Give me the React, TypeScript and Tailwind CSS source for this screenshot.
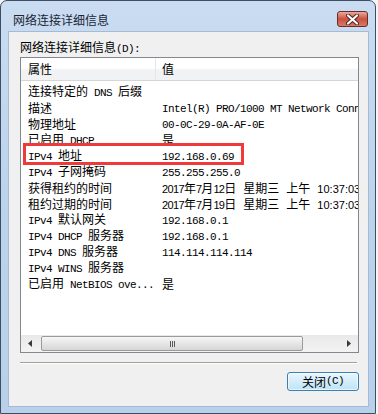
import React from "react";

type Val = string | { date: string };

const rows: [string, Val][] = [
  ["连接特定的 DNS 后缀", ""],
  ["描述", "Intel(R) PRO/1000 MT Network Connection"],
  ["物理地址", "00-0C-29-0A-AF-0E"],
  ["已启用 DHCP", "是"],
  ["IPv4 地址", "192.168.0.69"],
  ["IPv4 子网掩码", "255.255.255.0"],
  ["获得租约的时间", { date: "2017年7月12日 星期三 上午 10:37:03" }],
  ["租约过期的时间", { date: "2017年7月19日 星期三 上午 10:37:03" }],
  ["IPv4 默认网关", "192.168.0.1"],
  ["IPv4 DHCP 服务器", "192.168.0.1"],
  ["IPv4 DNS 服务器", "114.114.114.114"],
  ["IPv4 WINS 服务器", ""],
  ["已启用 NetBIOS ove...", "是"],
];

// ascii runs in a narrow mono face, CJK in 12px
function Mixed({ text }: { text: string }) {
  const parts = text.split(/([\x00-\x7f]+)/).filter((p) => p !== "");
  return (
    <>
      {parts.map((p, i) =>
        /^[\x00-\x7f]+$/.test(p) ? (
          <span key={i} className="font-['Liberation_Mono',monospace] text-[11px] tracking-[-0.6px] whitespace-pre">
            {p}
          </span>
        ) : (
          <span key={i}>{p}</span>
        )
      )}
    </>
  );
}

// date strings use a proportional face for digits
function DateText({ text }: { text: string }) {
  const parts = text.split(/([0-9:]+| )/).filter((p) => p !== "");
  return (
    <>
      {parts.map((p, i) =>
        p === " " ? (
          <span key={i} className="inline-block w-[7px]" />
        ) : /^[0-9]+$/.test(p) ? (
          <span key={i} className="font-['Liberation_Sans',sans-serif] text-[11px] tracking-[-0.65px]">
            {p}
          </span>
        ) : /^[0-9:]+$/.test(p) ? (
          <span key={i} className="font-['Liberation_Sans',sans-serif] text-[11px]">
            {p}
          </span>
        ) : (
          <span key={i}>{p}</span>
        )
      )}
    </>
  );
}

export default function App() {
  return (
    <div className="w-[378px] h-[414px] bg-[#f4f4f4] overflow-hidden font-['Noto_Sans_CJK_SC',sans-serif] text-[12px] text-black">
      <div className="relative w-[376px] h-[414px] border border-[#3e4e62] rounded-t-[7px] bg-gradient-to-b from-[#c9dcf1] via-[#bcd3ec] to-[#b8d0ea] flex flex-col pl-[7px] pr-[6px] pb-[6px]">
        {/* title bar */}
        <div className="h-[30px] flex items-center justify-between pt-[7px] pl-[5px] pr-[1px] shrink-0">
          <span className="text-[12px] text-[#1b2535] leading-none">网络连接详细信息</span>
          <div className="w-[31px] h-[16px] rounded-[3px] border border-[#6a2b2b] bg-gradient-to-b from-[#e9a99a] via-[#c9503f] to-[#d77a66] flex items-center justify-center mb-[1px]">
            <svg width="13" height="11" viewBox="0 0 13 11">
              <path d="M2 1.5 L11 9.5 M11 1.5 L2 9.5" stroke="#4a2020" strokeWidth="4" strokeLinecap="round" />
              <path d="M2 1.5 L11 9.5 M11 1.5 L2 9.5" stroke="#ffffff" strokeWidth="2.2" strokeLinecap="round" />
            </svg>
          </div>
        </div>

        {/* client area */}
        <div className="flex-1 bg-[#f0f0f0] border border-[#a5bbd5] flex flex-col pt-[8px] pl-[11px] pr-[9px]">
          <div className="leading-[14px] h-[14px]">
            <Mixed text="网络连接详细信息(D):" />
          </div>

          {/* list view */}
          <div className="relative mt-[3px] h-[296px] border border-[#828790] bg-white flex flex-col overflow-hidden">
            <div className="h-[23px] shrink-0 flex border-b border-[#d5d5d5] bg-gradient-to-b from-white from-45% to-[#f1f2f4] to-55%">
              <div className="w-[135px] pl-[7px] flex items-center border-r border-[#e3e6ea]">属性</div>
              <div className="flex-1 pl-[6px] flex items-center">值</div>
            </div>
            <div className="flex-1 pt-[3px] overflow-hidden">
              {rows.map(([k, v], i) => (
                <div key={i} className="h-[16px] flex items-center whitespace-nowrap">
                  <div className="w-[135px] pl-[7px] shrink-0 overflow-hidden">
                    <Mixed text={k} />
                  </div>
                  <div className="pl-[6px] whitespace-nowrap">
                    {typeof v === "string" ? <Mixed text={v} /> : <DateText text={v.date} />}
                  </div>
                </div>
              ))}
            </div>

            {/* horizontal scrollbar */}
            <div className="h-[17px] shrink-0 flex items-center bg-gradient-to-b from-[#e9e9e9] to-[#f3f3f3]">
              <div className="w-[18px] h-[17px] flex items-center justify-center">
                <svg width="4" height="7" viewBox="0 0 4 7">
                  <path d="M4 0 L0 3.5 L4 7 Z" fill="#3a3a3a" />
                </svg>
              </div>
              <div className="ml-[2px] w-[262px] h-[15px] rounded-[2px] border border-[#9a9a9a] bg-gradient-to-b from-[#f6f6f6] via-[#e6e6e6] to-[#d6d6d6] flex items-center justify-center">
                <div className="flex gap-[1px]">
                  <span className="w-[1px] h-[6px] bg-[#5a5a5a]" />
                  <span className="w-[1px] h-[6px] bg-[#5a5a5a]" />
                  <span className="w-[1px] h-[6px] bg-[#5a5a5a]" />
                </div>
              </div>
              <div className="flex-1" />
              <div className="w-[18px] h-[17px] flex items-center justify-center">
                <svg width="4" height="7" viewBox="0 0 4 7">
                  <path d="M0 0 L4 3.5 L0 7 Z" fill="#3a3a3a" />
                </svg>
              </div>
            </div>

            {/* red highlight box */}
            <div className="absolute left-[2px] top-[85px] w-[221px] h-[22px] border-[3px] border-[#f03a3a]" />
          </div>

          <div className="mt-[9px] mr-[2px] h-[2px] border-t border-[#a0a0a0] border-b border-b-white" />

          <div className="flex justify-end mt-[8px]">
            <button className="w-[72px] h-[19px] rounded-[3px] border border-[#3c7fb1] bg-gradient-to-b from-[#eaf6fd] via-[#d3edfa] to-[#bde4f7] shadow-[inset_0_0_0_1px_rgba(255,255,255,0.6)] flex items-center justify-center leading-none text-[12px]">
              <Mixed text="关闭(C)" />
            </button>
          </div>
        </div>
      </div>
    </div>
  );
}
